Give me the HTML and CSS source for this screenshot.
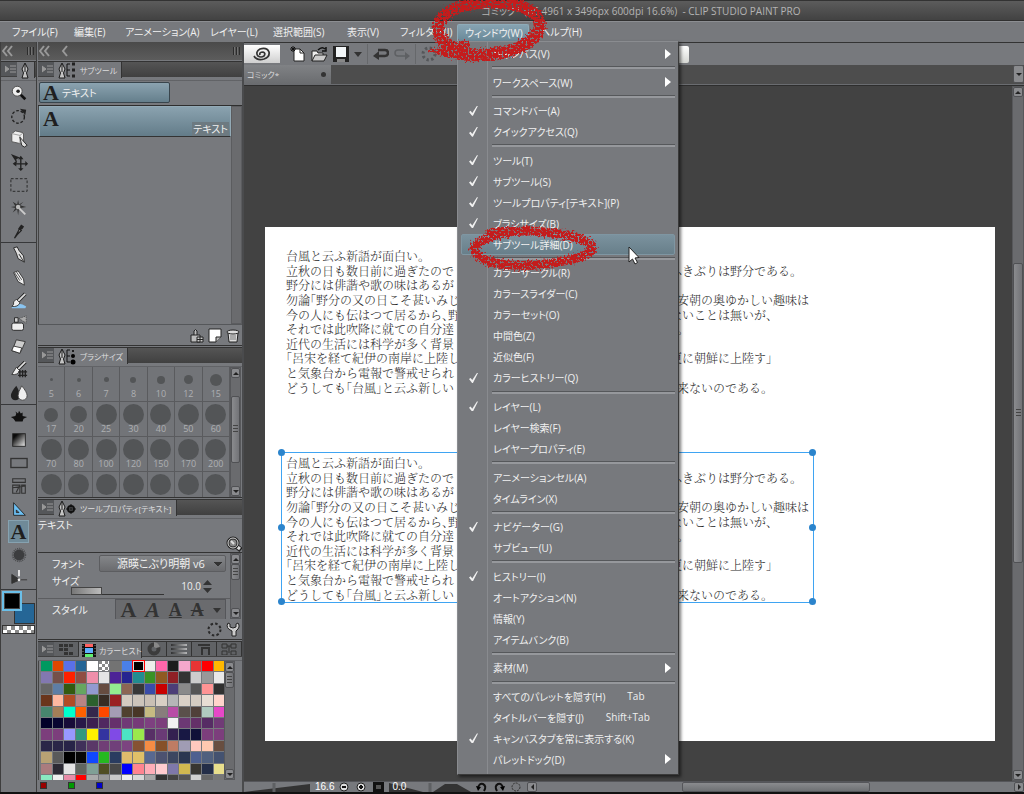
FILE: index.html
```html
<!DOCTYPE html>
<html lang="ja">
<head>
<meta charset="utf-8">
<title>CLIP STUDIO PAINT PRO</title>
<link rel="stylesheet" href="styles.css">
</head>
<body>
<svg width="0" height="0" class="defs" aria-hidden="true">
  <defs>
    <g id="nib"><path d="M5 1L8 7L6.500 11L8 16H2L3.500 11L2 7Z" fill="#c4c4c4" stroke="#1a1a1a"/><path d="M5 2V10" stroke="#1a1a1a"/></g>
    <g id="menuic"><path d="M0 1L4 4L0 7ZM5 1H11M5 4H11M5 7H11" fill="#999" stroke="#999"/></g>
    <linearGradient id="bw"><stop offset="0" stop-color="#111"/><stop offset="1" stop-color="#eee"/></linearGradient>
    <linearGradient id="bwd" x2="1" y2="1"><stop offset="0.200" stop-color="#0a0a0a"/><stop offset="1" stop-color="#f0f0f0"/></linearGradient>
  </defs>
</svg>
<div class="app">
  <header class="title">コミック* (A5 4961 x 3496px 600dpi 16.6%)&nbsp; - CLIP STUDIO PAINT PRO</header>
  <nav class="menubar">
    <button>ファイル(F)</button><button>編集(E)</button><button>アニメーション(A)</button><button>レイヤー(L)</button><button>選択範囲(S)</button><button>表示(V)</button><button>フィルター(I)</button><button class="open">ウィンドウ(W)</button><button>ヘルプ(H)</button>
  </nav>
  <div class="work">
    <aside class="toolcol">
      <div class="dockhead"><svg width="12" height="12" viewBox="0 0 12 12"><path d="M5 1L1 6L5 11M10 1L6 6L10 11" class="chev"/></svg><i class="grip"></i></div>
      <div class="tabs"><span class="tabmenu"><svg width="12" height="8"><use href="#menuic"/></svg></span><span class="tab"><svg width="10" height="17"><use href="#nib"/></svg></span></div>
      <div class="tools">
        <button aria-label="虫めがね"><svg viewBox="0 0 20 20"><path d="M11 11L17 17" stroke="#111" stroke-width="3"/><circle cx="8" cy="8" r="5.500" fill="#eee" stroke="#444"/><circle cx="9" cy="8" r="2" fill="#222"/></svg></button>
        <button aria-label="回転"><svg viewBox="0 0 20 20"><circle cx="9" cy="11" r="7" fill="none" stroke="#222" stroke-width="1.500" stroke-dasharray="3 2"/><path d="M11 2L18 3L17 9Z" fill="#222"/></svg></button>
        <button aria-label="操作"><svg viewBox="0 0 20 20"><path d="M2 4L6 1L15 3V12L11 15L2 13Z" fill="#eee" stroke="#555"/><path d="M2 4L11 6L15 3M11 6V15" stroke="#999" fill="none"/><path d="M11 8L19 17L16 19L13 17Z" fill="#ddd" stroke="#222"/></svg></button>
        <button aria-label="レイヤー移動"><svg viewBox="0 0 20 20"><path d="M1 1L11 5L7 7L8 12Z" fill="#222"/><path d="M12 5V19M5 12H19" stroke="#222" stroke-width="1.500"/><path d="M12 3L9 7H15ZM12 20L9 17H15ZM3 12L7 9V15ZM20 12L17 9V15Z" fill="#222"/></svg></button>
        <button aria-label="選択範囲"><svg viewBox="0 0 20 20"><rect x="1" y="3" width="18" height="14" fill="none" stroke="#222" stroke-dasharray="3 2"/></svg></button>
        <button aria-label="自動選択"><svg viewBox="0 0 20 20"><path d="M9 1L10 6L15 3L11 7L18 9L12 10L15 15L10 11L9 18L8 11L3 15L6 10L1 9L6 8L3 3L8 6Z" fill="#333"/><path d="M10 10L17 17" stroke="#ccc" stroke-width="2"/><circle cx="9" cy="9" r="2.500" fill="#bbb"/></svg></button>
        <button aria-label="スポイト"><svg viewBox="0 0 20 20"><path d="M11 7L5 18L8 14L13 9" fill="#bbb" stroke="#222" stroke-width="1.500"/><path d="M10 6L13 8M12 7L14 4" stroke="#222" stroke-width="4"/></svg></button>
        <hr>
        <button aria-label="ペン"><svg viewBox="0 0 20 20"><path d="M4 2L8 1L10 5L15 11L16 18L9 14L7 8Z" fill="#ddd" stroke="#222"/><path d="M10 9L15 17" stroke="#222"/></svg></button>
        <button aria-label="鉛筆"><svg viewBox="0 0 20 20"><path d="M4 4L9 2L15 11L16 18L9 14Z" fill="#eee" stroke="#333"/><path d="M5 4L11 13M7 3L13 12" stroke="#444"/></svg></button>
        <button aria-label="筆"><svg viewBox="0 0 20 20"><path d="M2 16Q10 10 18 16L17 18H2Z" fill="#8ac4f0"/><path d="M17 2L9 10" stroke="#222" stroke-width="4"/><path d="M17 2L9 10" stroke="#ddd" stroke-width="2"/><path d="M7 8L11 12Q9 17 2 16Q5 14 4 11Z" fill="#eee" stroke="#333"/></svg></button>
        <button aria-label="エアブラシ"><svg viewBox="0 0 20 20"><path d="M10 4L18 1V9Z" fill="#aaa" stroke="#444" stroke-dasharray="1 1"/><path d="M5 3H9V8H5Z" fill="#ccc" stroke="#222"/><rect x="2" y="9" width="13" height="8" rx="2" fill="#eee" stroke="#222"/></svg></button>
        <button aria-label="消しゴム"><svg viewBox="0 0 20 20"><path d="M7 2L17 4L14 11L11 17L2 14L4 10Z" fill="#ccc" stroke="#333"/><path d="M4 9L13 11L11 17L2 14Z" fill="#fff" stroke="#333"/></svg></button>
        <button aria-label="デコレーション"><svg viewBox="0 0 20 20"><path d="M17 1L9 9" stroke="#222" stroke-width="4"/><path d="M17 1L9 9" stroke="#ddd" stroke-width="2"/><path d="M7 7L11 11Q8 16 2 15Z" fill="#eee" stroke="#333"/><path d="M9 12H19M9 16H19M11 10V18M14 10V18M17 10V18" stroke="#222" stroke-width="1.500"/></svg></button>
        <button aria-label="色混ぜ"><svg viewBox="0 0 20 20"><path d="M7 2Q1 9 1 13A5 5 0 0 0 11 13Q11 9 7 2Z" fill="#222"/><path d="M13 2Q9 9 9 13A5 5 0 0 0 19 13Q19 9 13 2Z" fill="#eee" stroke="#444"/></svg></button>
        <hr>
        <button aria-label="塗りつぶし"><svg viewBox="0 0 20 20"><path d="M6 9L7 6L6 4L9 6L10 3L12 6L14 5V9L19 10L15 12L14 15H6L4 12L1 10Z" fill="#111"/></svg></button>
        <button aria-label="グラデーション"><svg viewBox="0 0 20 20"><rect x="3" y="3" width="14" height="14" fill="url(#bwd)" stroke="#222"/></svg></button>
        <button aria-label="図形"><svg viewBox="0 0 20 20"><rect x="1" y="5" width="18" height="10" fill="none" stroke="#333" stroke-width="1.500"/></svg></button>
        <button aria-label="コマ枠"><svg viewBox="0 0 20 20"><path d="M3 2H17V6H3ZM3 9H11V18H3ZM13 9H17V18H13ZM3 12L17 10M7 17L11 9" fill="none" stroke="#333" stroke-width="1.200"/></svg></button>
        <button aria-label="定規"><svg viewBox="0 0 20 20"><path d="M4 3V17H17ZM7 11V14H10Z" fill="#6cc0f4" stroke="#222" fill-rule="evenodd"/></svg></button>
        <button class="sel" aria-label="テキスト"><b class="bigA">A</b></button>
        <button aria-label="ぼかし"><svg viewBox="0 0 20 20"><circle cx="10" cy="10" r="6" fill="#3c3d3f"/><circle cx="10" cy="10" r="7" fill="none" stroke="#4a4b4d" stroke-width="2" stroke-dasharray="1 1"/></svg></button>
        <button aria-label="線修正"><svg viewBox="0 0 20 20"><path d="M2 6L11 12L2 16ZM11 12H19" fill="#333" stroke="#333"/><path d="M10 1V8" stroke="#eee" stroke-width="2"/><circle cx="10" cy="12" r="1.500" fill="#eee"/></svg></button>
        <hr>
      </div>
      <div class="chips"><i class="chip back"></i><i class="chip front"></i></div>
      <div class="checker"></div>
    </aside>

    <aside class="panels">
      <div class="dockhead"><svg width="30" height="12" viewBox="0 0 30 12"><path d="M5 1L1 6L5 11M10 1L6 6L10 11M28 1L24 6L28 11" class="chev"/></svg><i class="grip"></i></div>

      <section class="p-sub">
        <div class="tabs"><span class="tabmenu"><svg width="12" height="8"><use href="#menuic"/></svg></span><span class="tab"><svg width="20" height="17"><use href="#nib"/><path d="M13 2H10V14H13M10 8H13" fill="none" stroke="#111"/><path d="M15 2H18M15 8H18M15 14H18" stroke="#222" stroke-width="3"/></svg>サブツール</span></div>
        <div class="groups"><button class="group"><b class="bigA">A</b>テキスト</button></div>
        <div class="listwrap"><div class="list"><button class="entry"><b class="bigA">A</b><span>テキスト</span></button></div><i class="gutter"></i></div>
        <div class="foot">
          <svg width="14" height="15" viewBox="0 0 14 15"><path d="M1 7H10V14H1ZM4 7V3Q5.500 0 7 3V7" fill="#bbb" stroke="#222"/><path d="M7 9H13V14H7ZM10 9V14M7 11.500H13" fill="#ccc" stroke="#222"/></svg>
          <svg width="14" height="15" viewBox="0 0 14 15"><path d="M1 1H13V9L8 14H1Z" fill="#fff" stroke="#222"/><path d="M13 9H8V14" fill="#bbb" stroke="#222"/></svg>
          <svg width="14" height="15" viewBox="0 0 14 15"><path d="M2 5H12L11 14H3Z" fill="#ddd" stroke="#222"/><ellipse cx="7" cy="4" rx="6" ry="2" fill="#ddd" stroke="#222"/><path d="M5 7V12M7 7V12M9 7V12" stroke="#777"/></svg>
        </div>
      </section>

      <section class="p-brush">
        <div class="tabs"><span class="tabmenu"><svg width="12" height="8"><use href="#menuic"/></svg></span><span class="tab"><svg width="20" height="17"><use href="#nib"/><path d="M13 2H10V14H13M10 8H13" fill="none" stroke="#111"/><circle cx="16" cy="3" r="1" /><circle cx="16" cy="8" r="2"/><circle cx="16" cy="14" r="2.500"/></svg>ブラシサイズ</span></div>
        <div class="scrollwrap"><div class="brushes" id="brushes"></div><div class="vscroll"><i class="btn up"></i><i class="thumb mid"></i><i class="btn down"></i></div></div>
      </section>

      <section class="p-prop">
        <div class="tabs"><span class="tabmenu"><svg width="12" height="8"><use href="#menuic"/></svg></span><span class="tab"><svg width="20" height="17"><use href="#nib"/><circle cx="14" cy="9" r="3" fill="none" stroke="#111" stroke-width="2"/><path d="M14 4V14M9 9H19" stroke="#111"/></svg>ツールプロパティ[テキスト]</span></div>
        <div class="preview">テキスト<svg width="16" height="16" viewBox="0 0 16 16"><path d="M9 9L15 14" stroke="#222" stroke-width="5"/><path d="M9 9L14 13" stroke="#ddd" stroke-width="3"/><circle cx="7" cy="7" r="5" fill="#888" stroke="#222" stroke-width="3"/><circle cx="7" cy="7" r="5" fill="none" stroke="#ddd"/><path d="M5 5L8 8" stroke="#ddd" stroke-width="2"/></svg></div>
        <div class="scrollwrap propbody">
          <div class="props">
            <div class="row font"><label for="font">フォント</label><select id="font"><option>源暎こぶり明朝 v6</option></select></div>
            <div class="row size"><label for="size">サイズ</label><span class="slider"><i></i></span><input id="size" value="10.0"><svg width="9" height="13" viewBox="0 0 9 13"><path d="M0 5L4.500 0L9 5ZM0 8L4.500 13L9 8Z" fill="#333"/></svg></div>
            <div class="row style"><span>スタイル</span><span class="styles"><button>A</button><button class="it">A</button><button class="un">A</button><button class="st">A</button><i class="caret"></i></span></div>
          </div>
          <div class="vscroll"><i class="btn up"></i><i class="thumb small"></i><i class="btn down end"></i></div>
        </div>
        <div class="foot">
          <svg width="15" height="15" viewBox="0 0 15 15"><circle cx="7.500" cy="7.500" r="6" fill="none" stroke="#2a2a2a" stroke-width="2" stroke-dasharray="2.500 2.200"/></svg>
          <svg width="14" height="15" viewBox="0 0 14 15"><path d="M2 1L4 2V5L7 6L10 5V2L12 1Q15 5 10 9V14H6V9Q-1 6 2 1Z" fill="#ccc" stroke="#222"/></svg>
        </div>
      </section>

      <section class="p-color">
        <div class="tabs"><span class="tabmenu"><svg width="12" height="8"><use href="#menuic"/></svg></span>
          <span class="mini"><svg width="14" height="12"><path d="M0 1H4V4H0ZM5 1H9V4H5ZM10 1H14V4H10ZM0 5H4V8H0ZM5 5H9V8H5ZM5 9H9V12H5ZM10 9H14V12H10Z" fill="#333"/></svg></span>
          <span class="tab"><svg width="14" height="13"><path d="M0 0H14V13H0Z" fill="#111"/><path d="M3 0H11V3H3Z" fill="#ff6060"/><path d="M3 4H11V9H3Z" fill="#60b0ff"/><path d="M3 10H11V13H3Z" fill="#60f070"/><path d="M1 1V13M13 1V13" stroke="#888" stroke-dasharray="1 2"/></svg>カラーヒスト</span>
          <span class="mini"><svg width="14" height="14"><circle cx="7" cy="7" r="4.500" fill="none" stroke="#3c3c3c" stroke-width="4"/><path d="M7 0A7 7 0 0 1 13 5L9 6L7 5Z" fill="#888"/></svg></span>
          <span class="mini"><svg width="16" height="12"><path d="M0 1H16V3H0ZM0 5H16V7H0ZM0 9H16V11H0Z" fill="url(#bw)" opacity="0.600"/></svg></span>
          <span class="mini"><svg width="14" height="12"><path d="M1 2H13M4 5H12V12M5 6V12" stroke="#333" stroke-width="2" fill="none"/></svg></span>
          <span class="mini"><svg width="16" height="12"><path d="M1 1H6V5H1ZM10 1H15V5H10ZM1 8H6V12H1ZM10 8H15V12H10ZM6 3H10M8 3V10" stroke="#333" fill="none"/></svg></span>
        </div>
        <div class="scrollwrap palwrap"><div class="palette" id="palette"></div><div class="vscroll"><i class="btn up"></i><i class="thumb small"></i><i class="btn down end"></i></div></div>
        <div class="rgb"><i class="r"></i><i class="g"></i><i class="b"></i></div>
      </section>
    </aside>

    <main class="doc">
      <div class="cmd">
        <button class="logo" aria-label="CLIP STUDIO"><svg width="18" height="14" viewBox="0 0 18 14"><path d="M7 8Q6 5 10 5Q13 6 11 9Q8 11 5 9Q2 5 7 2Q14 0 16 5Q17 10 11 12Q4 14 1 9" fill="none" stroke="#333" stroke-width="1.700"/></svg></button>
        <button aria-label="新規"><svg width="16" height="16" viewBox="0 0 16 16"><path d="M4 3H10L14 7V15H4Z" fill="#fff" stroke="#222"/><path d="M10 3V7H14" fill="none" stroke="#222"/><path d="M0 3H6M3 0V6M1 1L5 5M5 1L1 5" stroke="#111"/></svg></button>
        <button aria-label="開く"><svg width="17" height="16" viewBox="0 0 17 16"><path d="M1 15V5H6L7 7H12V10" fill="#eee" stroke="#222"/><path d="M4 9H16L13 15H1Z" fill="#ccc" stroke="#222"/><path d="M7 4Q11 0 14 3M15 1V5H11" stroke="#111" fill="none" stroke-width="1.500"/></svg></button>
        <button aria-label="保存"><svg width="16" height="16" viewBox="0 0 16 16"><path d="M0 0H16V16H0Z" fill="#222"/><path d="M3 1H13V11H3Z" fill="#f2f6f8"/><path d="M4 13H12V16H4Z" fill="#888"/></svg></button>
        <i class="caret"></i><i class="div"></i>
        <button aria-label="取り消し"><svg width="16" height="12" viewBox="0 0 16 12"><path d="M5 2H12Q15 2 15 5Q15 8 12 8H4" fill="none" stroke="#333" stroke-width="2.500"/><path d="M0 8L6 3V12Z" fill="#333"/></svg></button>
        <button aria-label="やり直し"><svg width="16" height="12" viewBox="0 0 16 12"><path d="M12 8H4Q1 8 1 5Q1 2 4 2H10" fill="none" stroke="#5e6063" stroke-width="1.500"/><path d="M16 8L11 4V12Z" fill="#5e6063"/></svg></button>
        <i class="div"></i>
        <button aria-label="消去"><svg width="16" height="16" viewBox="0 0 16 16"><circle cx="8" cy="8" r="6" fill="none" stroke="#55575a" stroke-width="3" stroke-dasharray="2.300 2.400"/></svg></button>
        <button class="lastcmd" aria-label="素材"></button>
      </div>
      <div class="doctabs"><button>コミック*<i></i></button><i class="btn down"></i></div>
      <div class="view">
        <div class="stage">
          <div class="paper">
            <div class="txt one">
              <p><span>台風と云ふ新語が面白い。</span></p>
              <p><span>立秋の日も数日前に過ぎたので</span><span class="in">ふきぶりは野分である。</span></p>
              <p><span>野分には俳諧や歌の味はあるが</span></p>
              <p><span>勿論「野分の又の日こそ甚いみじ</span><span>平安朝の奥ゆかしい趣味は</span></p>
              <p><span>今の人にも伝はつて居るから、野</span><span class="in">ないことは無いが、</span></p>
              <p><span>それでは此吹降に就ての自分達</span><span>る。</span></p>
              <p><span>近代の生活には科学が多く背景</span></p>
              <p><span>「呂宋を経て紀伊の南岸に上陸し</span><span class="in">更に朝鮮に上陸す」</span></p>
              <p><span>と気象台から電報で警戒せられ</span></p>
              <p><span>どうしても「台風」と云ふ新しい</span><span>出来ないのである。</span></p>
            </div>
            <div class="txt two">
              <i class="h tl"></i><i class="h tr"></i><i class="h ml"></i><i class="h mr"></i><i class="h bl"></i><i class="h br"></i>
              <p><span>台風と云ふ新語が面白い。</span></p>
              <p><span>立秋の日も数日前に過ぎたので</span><span class="in">ふきぶりは野分である。</span></p>
              <p><span>野分には俳諧や歌の味はあるが</span></p>
              <p><span>勿論「野分の又の日こそ甚いみじ</span><span>平安朝の奥ゆかしい趣味は</span></p>
              <p><span>今の人にも伝はつて居るから、野</span><span class="in">ないことは無いが、</span></p>
              <p><span>それでは此吹降に就ての自分達</span><span>る。</span></p>
              <p><span>近代の生活には科学が多く背景</span></p>
              <p><span>「呂宋を経て紀伊の南岸に上陸し</span><span class="in">更に朝鮮に上陸す」</span></p>
              <p><span>と気象台から電報で警戒せられ</span></p>
              <p><span>どうしても「台風」と云ふ新しい</span><span>出来ないのである。</span></p>
            </div>
          </div>
        </div>
        <div class="vscroll wide"><i class="btn up"></i><i class="thumb doc-thumb"></i><i class="btn down end"></i></div>
      </div>
      <div class="status">
        <svg width="66" height="9" viewBox="0 0 66 9"><path d="M0 9L66 1V9Z" fill="#333"/><path d="M30 0V9" stroke="#5e6063" stroke-width="3"/></svg>
        <span class="num">16.6</span>
        <button aria-label="縮小"><svg width="12" height="10"><circle cx="5" cy="5" r="4" fill="#ddd" stroke="#222"/><path d="M3 5H7" stroke="#111" stroke-width="2"/></svg></button>
        <button aria-label="拡大"><svg width="12" height="10"><circle cx="5" cy="5" r="4" fill="#ddd" stroke="#222"/><path d="M3 5H7M5 3V7" stroke="#111" stroke-width="2"/></svg></button>
        <button aria-label="全体"><svg width="11" height="10"><path d="M0 0H11V10H0Z" fill="#111"/><path d="M3 3H8V7H3Z" fill="#555"/></svg></button>
        <span class="num zero">0.0</span>
        <svg width="82" height="9" viewBox="0 0 82 9"><path d="M0 0L34 9H0ZM44 9L56 1H68L82 9Z" fill="#333"/><path d="M41 0V9" stroke="#5e6063" stroke-width="3"/></svg>
        <button aria-label="左回転"><svg width="12" height="10"><path d="M2 6Q3 1 7 2Q11 4 8 9" fill="none" stroke="#111" stroke-width="2"/><path d="M0 4L5 5L2 9Z"/></svg></button>
        <button aria-label="右回転"><svg width="12" height="10"><path d="M10 6Q9 1 5 2Q1 4 4 9" fill="none" stroke="#111" stroke-width="2"/><path d="M12 4L7 5L10 9Z"/></svg></button>
        <button aria-label="リセット"><svg width="12" height="10"><circle cx="6" cy="5" r="4" fill="none" stroke="#333" stroke-dasharray="2 1"/></svg></button>
        <div class="hscroll"><i class="btn left"></i><i class="hthumb"></i><i class="btn right"></i></div>
      </div>
    </main>
  </div>
  <footer class="edge"></footer>

  <ul class="menu">
    <li class="sub"><span>キャンバス(V)</span></li><li class="sep"></li>
    <li class="sub"><span>ワークスペース(W)</span></li><li class="sep"></li>
    <li class="on"><span>コマンドバー(A)</span></li><li class="on"><span>クイックアクセス(Q)</span></li><li class="sep"></li>
    <li class="on"><span>ツール(T)</span></li><li class="on"><span>サブツール(S)</span></li><li class="on"><span>ツールプロパティ[テキスト](P)</span></li><li class="on"><span>ブラシサイズ(B)</span></li><li class="hot"><span>サブツール詳細(D)</span></li><li class="sep"></li>
    <li><span>カラーサークル(R)</span></li><li><span>カラースライダー(C)</span></li><li><span>カラーセット(O)</span></li><li><span>中間色(Z)</span></li><li><span>近似色(F)</span></li><li class="on"><span>カラーヒストリー(Q)</span></li><li class="sep"></li>
    <li class="on"><span>レイヤー(L)</span></li><li><span>レイヤー検索(F)</span></li><li><span>レイヤープロパティ(E)</span></li><li class="sep"></li>
    <li><span>アニメーションセル(A)</span></li><li><span>タイムライン(X)</span></li><li class="sep"></li>
    <li class="on"><span>ナビゲーター(G)</span></li><li><span>サブビュー(U)</span></li><li class="sep"></li>
    <li class="on"><span>ヒストリー(I)</span></li><li><span>オートアクション(N)</span></li><li><span>情報(Y)</span></li><li><span>アイテムバンク(B)</span></li><li class="sep"></li>
    <li class="sub"><span>素材(M)</span></li><li class="sep"></li>
    <li><span>すべてのパレットを隠す(H)</span><kbd>Tab</kbd></li><li><span>タイトルバーを隠す(J)</span><kbd>Shift+Tab</kbd></li><li class="on"><span>キャンバスタブを常に表示する(K)</span></li><li class="sub"><span>パレットドック(D)</span></li>
  </ul>
  <svg class="marks" width="260" height="290" viewBox="420 0 260 290" aria-hidden="true">
    <defs>
      <filter id="crayon" x="-10%" y="-10%" width="120%" height="120%">
        <feTurbulence type="fractalNoise" baseFrequency="0.500" numOctaves="2" seed="4" result="n"/>
        <feDisplacementMap in="SourceGraphic" in2="n" scale="9" xChannelSelector="R" yChannelSelector="G" result="d"/>
        <feColorMatrix in="n" type="matrix" values="0 0 0 0 0 0 0 0 0 0 0 0 0 0 0 0 0 9 0 -3.100" result="m"/>
        <feComposite in="d" in2="m" operator="in"/>
      </filter>
    </defs>
    <g fill="none" stroke="#c41a1a" stroke-linecap="round" filter="url(#crayon)">
      <path d="M460 50C432 42 432 18 456 8C482 -1 520 0 536 15C548 30 530 48 500 53C482 56 462 56 447 51L464 46" stroke-width="12"/>
      <path d="M490 233C520 228 574 232 592 245C597 256 566 262 535 265C505 267 476 262 474 249C475 240 500 232 528 230" stroke-width="9"/>
    </g>
    <path d="M629 247V262L632.500 259L635 264L637.500 262.500L635 258L639 257.500Z" fill="#fff" stroke="#222"/>
  </svg>
</div>
<script src="app.js"></script>
</body>
</html>
```
FILE: styles.css
```css
* { box-sizing: border-box; }
body {
  margin: 0;
  overflow: hidden;
  background: #77797d;
  color: #f0f0f0;
  font-family: "Open Sans", "Noto Sans CJK JP", sans-serif;
  font-size: 10px;
  font-feature-settings: "palt";
}
button { border: 0; padding: 0; margin: 0; background: none; color: inherit; font: inherit; font-feature-settings: inherit; }
i { font-style: normal; flex: none; }
svg { display: block; flex: none; }
p, ul { margin: 0; padding: 0; }
.defs { position: absolute; }

.app { position: relative; display: flex; flex-direction: column; height: 100vh; }
.title {
  height: 21px;
  padding-left: 47%;
  background: linear-gradient(#5c5c5c, #424242);
  border-top: 1px solid #333;
  border-bottom: 1px solid #303030;
  color: #b4b4b4;
  line-height: 20px;
  white-space: nowrap;
}
.menubar {
  display: grid;
  grid-template-columns: 62px 51px 85px 63px 74px 53px 65px 75px 60px;
  height: 21px;
  padding-left: 4px;
  border-top: 1px solid #8c8e92;
}
.menubar button { padding-left: 8px; text-align: left; line-height: 19px; white-space: nowrap; }
.menubar .open { margin: 2px 3px 0 0; line-height: 15px; background: linear-gradient(#86a3b2, #688796); border: 1px solid #8eabb8; border-bottom: 0; border-radius: 2px 2px 0 0; padding-left: 7px; }
.work { display: flex; flex: 1; min-height: 0; }
.edge { height: 2px; background: #111; }

/* docks */
.toolcol { display: flex; flex-direction: column; width: 37px; border-left: 1px solid #3e3e3e; border-right: 1px solid #3e3e3e; }
.panels { display: flex; flex-direction: column; width: 207px; padding-left: 1px; border-right: 2px solid #4a4b4d; }
.dockhead { display: flex; flex: none; align-items: center; justify-content: space-between; height: 18px; padding: 0 2px 0 1px; background: linear-gradient(#4a4a4a, #5c5c5c); }
.chev { fill: none; stroke: #999; stroke-width: 2; }
.grip { width: 7px; height: 8px; background: repeating-linear-gradient(90deg, #2c2c2c 0 1px, #707070 1px 2px, transparent 2px 3px); }
.tabs { display: flex; flex: none; height: 20px; margin-top: 1px; background: linear-gradient(#555, #404040 15px, #77797d 15px, #77797d 18px, #4c4d50 19px); border-top: 1px solid #333; color: #ddd; font-size: 8px; }
.tabmenu { display: flex; width: 16px; height: 14px; padding: 3px 0 0 4px; background: #55575a; }
.tab { display: flex; align-items: center; gap: 3px; height: 16px; padding: 0 4px 0 3px; background: #77797d; border-right: 1px solid #333; white-space: nowrap; }
.mini { display: flex; align-items: center; justify-content: center; width: 25px; height: 14px; background: #606265; border-right: 1px solid #333; }

.tools { display: flex; flex-direction: column; }
.tools button { display: flex; align-items: center; justify-content: center; height: 23px; }
.tools svg { width: 18px; height: 18px; }
.tools hr { width: 100%; height: 1px; margin: 0; border: 0; background: #37383a; }
.tools .sel { align-self: center; width: 21px; background: #6f8a98; border: 1px solid #86a2b0; }
.bigA { font: bold 22px/21px "Liberation Serif", serif; color: #1f1f1f; }
.chips { position: relative; flex: none; height: 34px; margin-top: 1px; }
.chip { position: absolute; width: 20px; height: 20px; }
.chip.back { left: 13px; top: 12px; width: 21px; height: 21px; background: #256696; border: 1px solid #333; }
.chip.front { left: 1px; top: 0; background: #000; border: 2px solid #6bbfe8; outline: 1px solid #444; outline-offset: -3px; }
.checker { flex: none; width: 33px; height: 9px; margin-left: 1px; background: repeating-conic-gradient(#fff 0 25%, #8a8a8a 0 50%) 0 0 / 8px 8px; border: 1px solid #333; }

.p-sub, .p-brush, .p-prop, .p-color { display: flex; flex-direction: column; flex: none; }
.p-sub { height: 285px; }
.groups { height: 25px; padding: 1px; border-bottom: 1px solid #2e2e2e; }
.group { display: flex; align-items: center; gap: 3px; width: 131px; height: 21px; padding-left: 3px; background: linear-gradient(#8ba3b0, #657f8c); border: 1px solid #39454c; border-radius: 2px; }
.listwrap { display: flex; flex: 1; border-left: 1px solid #444; border-bottom: 1px solid #55575a; }
.list { flex: 1; }
.entry { display: flex; width: 100%; height: 31px; padding: 1px 1px 0 3px; background: linear-gradient(#8aa2af, #637c89); border: 1px solid #93aab6; border-bottom-color: #333; justify-content: space-between; }
.entry span { align-self: flex-end; line-height: 14px; background: #6d7a81; padding: 0 1px; }
.gutter { width: 11px; background: #6a6b6e; border: 1px solid #5b5c5f; }
.foot { display: flex; flex: none; align-items: center; justify-content: flex-end; gap: 4px; height: 20px; padding-right: 2px; }
.scrollwrap { display: flex; flex: 1; min-height: 0; }

.p-brush { height: 152px; border-top: 1px solid #333; }
.brushes { display: grid; flex: 1; grid-template-columns: repeat(7, 1fr); grid-auto-rows: 35px; overflow: hidden; background: #727478; }
.brush { position: relative; display: flex; align-items: center; justify-content: center; border-right: 1px solid #5a5b5e; border-bottom: 1px solid #5a5b5e; padding-bottom: 9px; }
.brush i { border-radius: 50%; background: #535557; }
.brush span { position: absolute; left: 0; right: 0; bottom: 0; text-align: center; color: #aeb0b3; font-size: 9px; line-height: 15px; }
.vscroll { display: flex; flex: none; flex-direction: column; width: 11px; margin-right: 1px; background: #6a6b6e; border: 1px solid #57585b; }
.btn { display: flex; align-items: center; justify-content: center; height: 10px; background: #8a8b8e; border: 1px solid #505154; border-radius: 2px; }
.btn::after { content: ""; border: 3px solid transparent; }
.up::after { border-bottom-color: #222; margin-top: -3px; }
.down::after { border-top-color: #222; margin-bottom: -3px; }
.left::after { border-right-color: #222; margin-left: -3px; }
.right::after { border-left-color: #222; margin-right: -3px; }
.thumb { display: block; background: linear-gradient(90deg, #8a8b8e, #727377); border: 1px solid #505154; border-radius: 2px; }
.thumb::after { content: ""; display: block; width: 5px; height: 8px; margin: 0 auto; background: repeating-linear-gradient(#444 0 1px, transparent 1px 3px); }
.thumb.mid { height: 67px; margin: 18px 0 auto; padding-top: 28px; }
.thumb.small { height: 16px; padding-top: 3px; }
.end { margin-top: auto; }

.p-prop { height: 142px; border-top: 1px solid #333; }
.preview { display: flex; flex: none; justify-content: space-between; height: 34px; border-bottom: 1px solid #333; line-height: 12px; }
.preview svg { align-self: flex-end; }
.propbody { flex: 1; }
.props { display: flex; flex: 1; flex-direction: column; overflow: hidden; }
.row { display: flex; flex: none; padding-left: 14px; padding-right: 4px; }
.font { align-items: center; justify-content: space-between; height: 21px; }
.font select { width: 127px; height: 17px; padding: 0 0 0 17px; font: inherit; font-size: 11px; font-feature-settings: inherit; color: #eee; appearance: none; border: 1px solid #5c5d60; border-radius: 2px; background: linear-gradient(45deg, transparent 50%, #333 50%) 114px 6px / 4px 4px no-repeat, linear-gradient(-45deg, transparent 50%, #333 50%) 118px 6px / 4px 4px no-repeat, linear-gradient(#848689, #6a6b6e); }
.size { position: relative; height: 25px; line-height: 14px; border-bottom: 1px solid #5c5d60; }
.slider { position: absolute; left: 33px; bottom: 3px; width: 93px; height: 8px; border-bottom: 1px solid #333; }
.slider i { display: block; width: 31px; height: 8px; border: 1px solid #444; background: linear-gradient(90deg, #777, #bbb); }
.size input { width: 26px; height: 14px; margin-left: auto; padding: 0; border: 0; background: none; color: #eee; font: inherit; text-align: right; align-self: center; }
.size svg { margin: 6px 14px 0 2px; }
.style { height: 21px; justify-content: space-between; line-height: 22px; }
.styles { display: flex; align-items: center; justify-content: space-around; width: 111px; background: #6a6b6e; border: 1px solid #55565a; border-bottom: 0; overflow: hidden; }
.styles button { font: bold 22px/20px "Liberation Serif", serif; color: #333; }
.styles .it { font-style: italic; }
.styles .un { text-decoration: underline; font-size: 18px; }
.styles .st { text-decoration: line-through; font-size: 18px; }
.caret { border: 4px solid transparent; border-top: 5px solid #333; border-bottom: 0; }

.p-color { flex: 1; min-height: 0; border-top: 1px solid #333; }
.p-color .tab { width: 63px; }
.palwrap { padding: 0 6px 0 2px; border-left: 1px solid #444; }
.palette { display: grid; flex: 1; grid-template-columns: repeat(16, 1fr); grid-template-rows: repeat(10, 1fr) 5px; gap: 1px; background: #77797d; }
.palette .pick { border: 1px solid #ddd; outline: 1px solid #f00; z-index: 1; }
.palette .clear { background: repeating-conic-gradient(#fff 0 25%, #888 0 50%) 0 0 / 6px 6px; }
.rgb { display: flex; flex: none; gap: 21px; height: 12px; padding: 2px; }
.rgb i { width: 7px; height: 7px; border: 1px solid #333; background: #900; }
.rgb .g { background: #090; }
.rgb .b { background: #00c; }

/* document */
.doc { display: flex; flex: 1; flex-direction: column; min-width: 0; background: #424242; }
.cmd { display: flex; flex: none; align-items: center; gap: 5px; height: 23px; background: #77797d; border-top: 1px solid #333; }
.logo { display: flex; align-items: center; justify-content: center; width: 36px; height: 18px; margin-right: 5px; background: linear-gradient(#fff, #cfcfcf); }
.div { width: 1px; height: 20px; background: #66686b; }
.lastcmd { width: 60px; height: 17px; margin-left: 187px; background: linear-gradient(#fff, #d4d6d2); border-radius: 2px; }
.doctabs { display: flex; flex: none; justify-content: space-between; height: 20px; background: #4d4d4d; border-bottom: 1px solid #6a6c70; }
.doctabs button { display: flex; align-items: center; justify-content: space-between; width: 87px; padding: 0 5px 0 3px; background: linear-gradient(#808285, #6a6c6f); color: #ddd; font-size: 8px; }
.doctabs button i { width: 5px; height: 5px; border-radius: 50%; background: #333; }
.doctabs > i { width: 11px; height: 18px; }
.view { display: flex; flex: 1; min-height: 0; border-top: 1px solid #2e2e2e; }
.stage { position: relative; flex: 1; overflow: hidden; }
.paper { position: absolute; left: 21px; top: 141px; right: 17px; bottom: 40px; background: #fff; color: #2a2a2a; }
.wide { width: 12px; margin: 0; }
.doc-thumb { height: 300px; margin-top: 166px; padding-top: 145px; }
.txt { position: absolute; left: 16px; width: 533px; padding: 3px 4px 0; border: 1px solid transparent; font-family: "Noto Serif CJK JP", "Noto Sans CJK JP", serif; font-weight: 300; font-size: 12px; line-height: 1.22; font-feature-settings: "halt"; }
.txt p { display: grid; grid-template-columns: 379px 1fr; white-space: nowrap; }
.txt .in { padding-left: 5px; }
.one { top: 18px; }
.two { top: 225px; border-color: #3fa4f2; }
.h { position: absolute; width: 7px; height: 7px; margin: -4px; border-radius: 50%; background: #2b84cc; }
.tl, .ml, .bl { left: 0; }
.tr, .mr, .br { left: 100%; }
.tl, .tr { top: 0; }
.ml, .mr { top: 50%; }
.bl, .br { top: 100%; }
.status { display: flex; flex: none; align-items: center; gap: 5px; height: 11px; background: #77797d; border-top: 1px solid #55565a; }
.num { font: 10px/10px "Liberation Sans", sans-serif; color: #fff; }
.zero { margin: 0 -22px 0 3px; z-index: 1; }
.hscroll { display: flex; flex: 1; }
.hscroll .btn { width: 10px; }
.hthumb { width: 188px; margin: 0 auto; border: 1px solid #55565a; border-radius: 2px; background: linear-gradient(#8a8b8e, #6e7073); }

/* window menu */
.menu {
  position: absolute;
  left: 457px;
  top: 41px;
  display: flex;
  flex-direction: column;
  width: 222px;
  min-height: 734px;
  padding: 1px 3px 4px;
  list-style: none;
  border: 1px solid #8a8c90;
  border-right-color: #3a3a3a;
  border-bottom-color: #3a3a3a;
  background: linear-gradient(90deg, transparent 29px, #898b8f 29px, #898b8f 30px, transparent 30px), #77797d;
  box-shadow: 2px 2px 3px #0008;
}
.menu li { display: flex; align-items: center; height: 21px; padding: 0 4px 0 32px; white-space: nowrap; }
.menu li::before { content: ""; width: 9px; height: 10px; margin-left: -24px; margin-right: 15px; }
.menu .on::before { background: #f0f0f0; clip-path: polygon(0 62%, 18% 50%, 36% 72%, 88% 0, 100% 0, 44% 100%, 34% 100%); }
.menu .sub::after { content: ""; margin-left: auto; border: 5px solid transparent; border-left: 6px solid #fff; border-right: 0; }
.menu .sep { flex: 1 0 7px; height: 7px; padding: 0; }
.menu .sep::before { width: auto; flex: 1; height: 2px; margin: 0 0 0 31px; border-top: 1px solid #56585b; background: #96989c; }
.menu .hot { background: linear-gradient(#7b929e, #687f8a); border: 1px solid #7f96a2; padding-left: 31px; border-radius: 2px; }
kbd { margin-left: 22px; font: inherit; }
.marks { position: absolute; left: 420px; top: 0; pointer-events: none; }
```
FILE: app.js
```javascript
const brushes = [[5, 3], [6, 4], [7, 5], [8, 6], [10, 8], [12, 9], [15, 12], [17, 14], [20, 17], [25, 21], [30, 21], [40, 21], [50, 21], [60, 21], [70, 21], [80, 21], [100, 21], [120, 21], [150, 21], [170, 21], [200, 21], ["", 21], ["", 21], ["", 21], ["", 21], ["", 21], ["", 21], ["", 21]];
document.getElementById("brushes").innerHTML = brushes.map(([n, d]) =>
  `<div class="brush"><i style="width:${d}px;height:${d}px"></i><span>${n}</span></div>`).join("");

const rows = [
  "009960 e04800 5a70e8 256696 ffffff clear 737373 4a80e8 pick ededeb ff66aa 1c1c1c f5a8cc e83434 ff0000 ffb800",
  "8278b0 75504a ff2000 904c42 ef8faa e5e5e5 4c2396 252590 228c90 389225 8f5a22 8f2026 333333 cccccc 999999 e8e8e8",
  "666666 5e7ea5 335a10 66a660 929ad0 664c40 94ec90 8c6654 383838 3a4ca8 c80000 4c3e78 8a8a8a 555555 ff9494 303030",
  "6a351c ffb8a0 b04c26 b88484 2c602e 382c24 9a2024 d4cbc0 ccc4ba c9bfb4 d8cfc5 b5b5b7 dad0c6 d5ccc2 e8ded4 ffd4cb",
  "47856e a37e58 00ffcc ff6000 35284c ff4800 a49cb4 50412f 483727 c6ba82 887d7c b84ca6 5a504b 50403a b0cbc0 e648c8",
  "000028 080530 180c38 281848 3c2050 502860 66306c 703a76 763a78 7e4080 7c3e7c f2f2f2 6c3874 643068 562c64 703a76",
  "7c3e7c 7c3e7c 9898ff 349880 fff000 3434a0 804ae6 4ce4c4 9ae84c 583066 6a3a76 342050 181844 101038 7c3e7c 7c3e7c",
  "2a2648 2a2648 282448 40305a 5a3868 703e76 70407a 7c4480 865232 f48c44 865028 be7c64 a09cb4 ffc8be ffc8b0 684e40",
  "b8a274 5a5a5a 000000 080808 1048ff 26b820 2a3c60 e0bc6c e0c068 586890 4c5270 3c4660 2a3650 4e6090 50607e 445270",
  "aa7c7e 2c2a34 e4e4e4 606660 80a096 504e24 484848 0000ff ff8490 ffaeb8 ffccd0 7e78aa d0b850 383632 242e48 e8de8c",
  "8ae8c0 eeeeee e88ca8 ff0000 aaaaaa 999999 c8c8c8 eeeeee d8d8d8 a8a8a8 333333 444444 555555 d0d0d0 666666 777777"
];
document.getElementById("palette").innerHTML = rows.join(" ").split(" ").map(c =>
  c === "clear" ? '<i class="clear"></i>' :
  c === "pick" ? '<i class="pick" style="background:#000"></i>' :
  `<i style="background:#${c}"></i>`).join("");
```
